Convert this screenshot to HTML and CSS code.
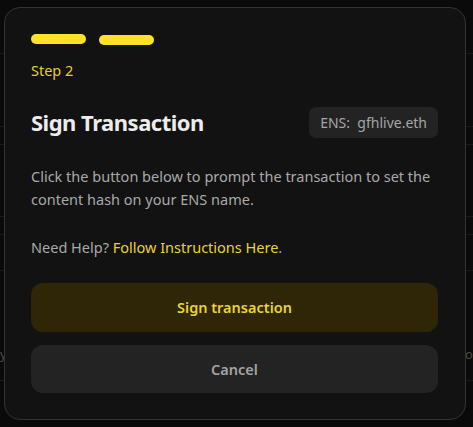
FILE: index.html
```html
<!DOCTYPE html>
<html lang="en">
<head>
<meta charset="utf-8">
<title>Sign Transaction</title>
<link rel="stylesheet" href="styles.css">
</head>
<body>
<div class="page">
  <div class="row r1"></div>
  <div class="row r2"></div>
  <div class="row r3"></div>
  <div class="row r4"></div>
  <div class="row r5"></div>
  <div class="row r6"></div>
  <div class="row r7"><span class="peek-l">y</span><span class="peek-r">lo</span></div>
</div>

<div class="modal">
  <div class="steps">
    <span class="bar"></span>
    <span class="bar bar-2"></span>
  </div>
  <div class="step-label">Step 2</div>
  <div class="header">
    <h1 class="title">Sign Transaction</h1>
    <div class="badge">ENS:&nbsp; gfhlive.eth</div>
  </div>
  <p class="desc">Click the button below to prompt the transaction to set the content hash on your ENS name.</p>
  <p class="help">Need Help? <a class="link" href="#">Follow Instructions Here</a>.</p>
  <div class="actions">
    <button class="btn btn-primary">Sign transaction</button>
    <button class="btn btn-secondary">Cancel</button>
  </div>
</div>
</body>
</html>
```

FILE: styles.css
```css
* { box-sizing: border-box; }

html, body {
  margin: 0;
  padding: 0;
  height: 427px;
  overflow: hidden;
  background: #0a0a0a;
  font-family: "Noto Sans", "Liberation Sans", sans-serif;
}

.page {
  width: 473px;
}

.row {
  border-bottom: 1px solid #1a1a1a;
}
.r1 { height: 54px; }
.r2 { height: 73px; }
.r3 { height: 18px; }
.r4 { height: 72px; }
.r5 { height: 18px; }
.r6 { height: 36px; }
.r7 {
  height: 110px;
  display: flex;
  justify-content: space-between;
  align-items: flex-start;
  padding-top: 74px;
  font-size: 13px;
  color: #4a4a4a;
}
.peek-l { margin-left: 0; }
.peek-r { margin-right: 0; }

.modal {
  position: absolute;
  left: 4px;
  top: 7px;
  width: 462px;
  height: 413px;
  background: #121212;
  border: 1px solid #333333;
  border-radius: 16px;
  padding: 26px 27px 26px 26px;
  display: flex;
  flex-direction: column;
}

.steps {
  display: flex;
  gap: 13px;
  align-items: flex-start;
}
.bar {
  display: block;
  width: 55px;
  height: 10px;
  border-radius: 5px;
  background: #ffe227;
}
.bar-2 { margin-top: 1px; }

.step-label {
  margin-top: 14px;
  font-size: 14.5px;
  line-height: 22px;
  color: #e6cf2d;
}

.header {
  margin-top: 26px;
  display: flex;
  justify-content: space-between;
  align-items: center;
  height: 31px;
}
.title {
  margin: 0;
  font-size: 22px;
  font-weight: 700;
  letter-spacing: -0.5px;
  color: #ececec;
  line-height: 31px;
}
.badge {
  height: 31px;
  padding: 0 11px;
  border-radius: 7px;
  background: #232323;
  color: #a6a6a6;
  font-size: 14px;
  line-height: 31px;
}

.desc {
  margin: 27px 0 0;
  font-size: 14.5px;
  line-height: 22.5px;
  color: #a9a9a9;
}

.help {
  margin: 26px 0 0;
  font-size: 14.5px;
  line-height: 22.5px;
  color: #a9a9a9;
}
.link {
  color: #e8d22e;
  text-decoration: none;
}

.actions {
  margin-top: 24px;
  display: flex;
  flex-direction: column;
  gap: 13px;
}
.btn {
  border: none;
  width: 100%;
  border-radius: 12px;
  font-family: inherit;
  font-size: 14.5px;
  font-weight: 600;
  cursor: pointer;
}
.btn-primary {
  height: 49px;
  background: #2e2607;
  color: #ead42f;
}
.btn-secondary {
  height: 48px;
  background: #232323;
  color: #a3a3a3;
}
```
